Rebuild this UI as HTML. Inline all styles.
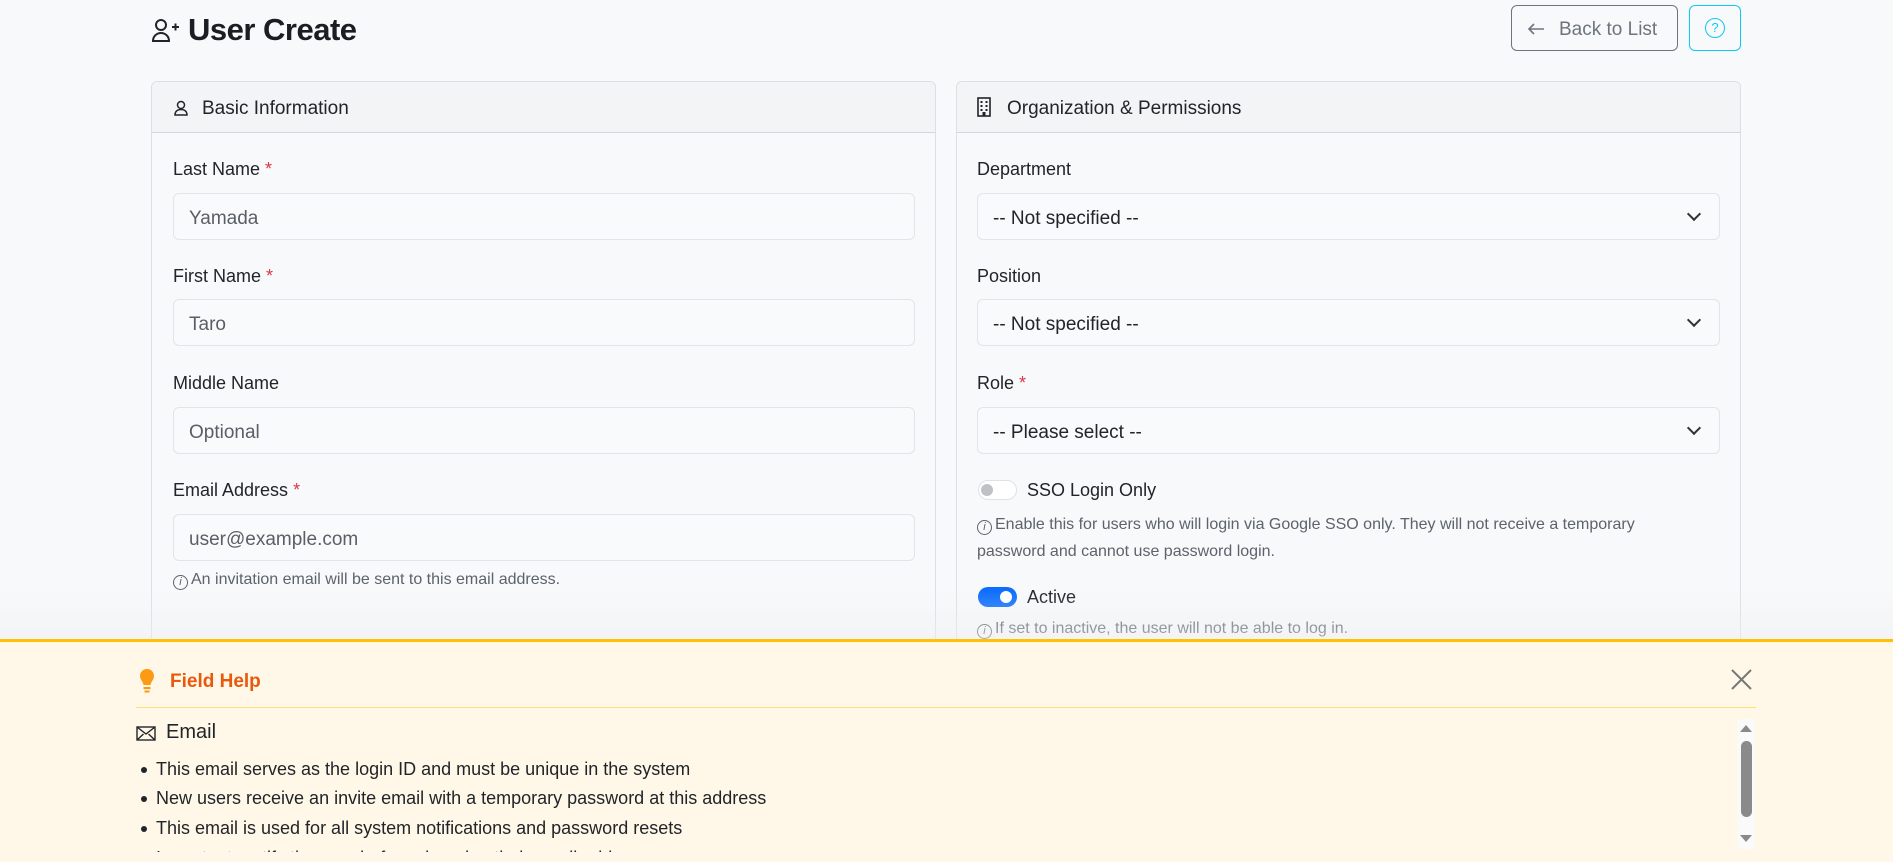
<!DOCTYPE html>
<html><head><meta charset="utf-8"><style>
*{box-sizing:border-box;margin:0;padding:0}
body{width:1893px;height:862px;overflow:hidden;background:#f8f9fb;font-family:"Liberation Sans",sans-serif;color:#212529;position:relative}
.a{position:absolute}
.t{font-size:18px;white-space:nowrap}
.card{position:absolute;top:81px;height:600px;border:1px solid #dcdfe3;border-radius:6px;background:#f8f9fb}
.ch{height:51px;background:#f3f4f6;border-bottom:1px solid #d3d6da;border-radius:6px 6px 0 0;font-size:19px;padding:16px 0 0 50px;position:relative}
.in{position:absolute;height:47px;border:1px solid #e1e4e8;border-radius:6px;background:#f9fafb;font-size:19px;color:#595f66;padding:14px 0 0 15px}
.sel{color:#212529}
.sel:after{content:"";position:absolute;right:20px;top:15px;width:8px;height:8px;border-right:2px solid #333;border-bottom:2px solid #333;transform:rotate(45deg)}
.req{color:#dc3545}
.help{font-size:16px;color:#5c636a;white-space:nowrap}
.ic{display:inline-block;width:15px;height:15px;border:1.3px solid #5c636a;border-radius:50%;font-size:11px;text-align:center;line-height:13px;font-style:italic;vertical-align:-1px;margin-right:3px}
li{list-style:none;position:absolute;left:156px;font-size:18px;white-space:nowrap;color:#212529}
li:before{content:"";position:absolute;left:-15px;top:8px;width:6px;height:6px;border-radius:50%;background:#212529}
</style></head><body>
<svg class="a" style="left:151px;top:17px" width="30" height="28" viewBox="0 0 30 28" fill="none" stroke="#212529" stroke-width="2"><circle cx="10" cy="8" r="5"/><path d="M2 24c0-5 4-8 8-8s8 3 8 8z"/><path d="M21 10h7M24.5 6.5v7"/></svg>
<div class="a" style="left:188px;top:12px;font-size:31px;font-weight:bold;color:#1a1d21;letter-spacing:-0.5px">User Create</div>
<div class="a" style="left:1511px;top:5px;width:167px;height:46px;border:1px solid #6c757d;border-radius:6px;font-size:19px;color:#6c757d;padding:13px 0 0 47px">Back to List</div>
<svg class="a" style="left:1526px;top:21px" width="20" height="16"><path d="M18 8H3M8 3L3 8l5 5" stroke="#6c757d" stroke-width="1.6" fill="none"/></svg>
<div class="a" style="left:1689px;top:5px;width:52px;height:46px;border:1px solid #0dcaf0;border-radius:6px"></div>
<div class="a" style="left:1705px;top:18px;width:20px;height:20px;border:1.6px solid #0dcaf0;border-radius:50%;color:#0dcaf0;font-size:13px;text-align:center;line-height:17px">?</div>

<div class="card" style="left:151px;width:785px"><div class="ch">Basic Information
<svg class="a" style="left:22px;top:18px" width="14" height="16" fill="none" stroke="#212529" stroke-width="1.5"><circle cx="7" cy="5" r="3.5"/><path d="M1 15c0-4 3-5.5 6-5.5s6 1.5 6 5.5z"/></svg></div></div>
<div class="card" style="left:956px;width:785px"><div class="ch">Organization &amp; Permissions
<svg class="a" style="left:20px;top:15px" width="14" height="20"><rect x="1" y="1" width="12" height="18" fill="none" stroke="#212529" stroke-width="1.6"/><g fill="#212529"><rect x="3.5" y="4" width="2" height="2"/><rect x="8.5" y="4" width="2" height="2"/><rect x="3.5" y="8" width="2" height="2"/><rect x="8.5" y="8" width="2" height="2"/><rect x="3.5" y="12" width="2" height="2"/><rect x="8.5" y="12" width="2" height="2"/><rect x="5.5" y="15" width="3" height="4"/></g></svg></div></div>

<div class="a t" style="left:173px;top:159px">Last Name <span class="req">*</span></div>
<div class="in" style="left:173px;top:193px;width:742px">Yamada</div>
<div class="a t" style="left:173px;top:266px">First Name <span class="req">*</span></div>
<div class="in" style="left:173px;top:299px;width:742px">Taro</div>
<div class="a t" style="left:173px;top:373px">Middle Name</div>
<div class="in" style="left:173px;top:407px;width:742px">Optional</div>
<div class="a t" style="left:173px;top:480px">Email Address <span class="req">*</span></div>
<div class="in" style="left:173px;top:514px;width:742px">user@example.com</div>
<div class="a help" style="left:173px;top:571px"><span class="ic">i</span>An invitation email will be sent to this email address.</div>

<div class="a t" style="left:977px;top:159px">Department</div>
<div class="in sel" style="left:977px;top:193px;width:743px">-- Not specified --</div>
<div class="a t" style="left:977px;top:266px">Position</div>
<div class="in sel" style="left:977px;top:299px;width:743px">-- Not specified --</div>
<div class="a t" style="left:977px;top:373px">Role <span class="req">*</span></div>
<div class="in sel" style="left:977px;top:407px;width:743px">-- Please select --</div>
<div class="a" style="left:978px;top:480px;width:39px;height:20px;border:1px solid #dee2e6;border-radius:10px;background:#fff"></div>
<div class="a" style="left:981px;top:484px;width:12px;height:12px;border-radius:50%;background:#bfc2c5"></div>
<div class="a t" style="left:1027px;top:480px">SSO Login Only</div>
<div class="a help" style="left:977px;top:511px;line-height:27px;white-space:normal;width:660px"><span class="ic">i</span>Enable this for users who will login via Google SSO only. They will not receive a temporary password and cannot use password login.</div>
<div class="a" style="left:978px;top:587px;width:39px;height:20px;border-radius:10px;background:#0d6efd"></div>
<div class="a" style="left:1000px;top:591px;width:12px;height:12px;border-radius:50%;background:#fff"></div>
<div class="a t" style="left:1027px;top:587px">Active</div>
<div class="a help" style="left:977px;top:620px"><span class="ic">i</span>If set to inactive, the user will not be able to log in.</div>

<div class="a" style="left:0;top:590px;width:1893px;height:50px;background:linear-gradient(rgba(240,241,243,0),rgba(238,239,241,.5))"></div>
<div class="a" style="left:0;top:639px;width:1893px;height:223px;background:#fff8e8;border-top:3px solid #ffc107"></div>
<svg class="a" style="left:138px;top:668px" width="18" height="26"><path d="M9 1C4.5 1 2 4.5 2 8c0 3.5 3 5.5 3.5 9h7C13 13.5 16 11.5 16 8c0-3.5-2.5-7-7-7z" fill="#fd9a14"/><rect x="5.5" y="19" width="7" height="2.2" fill="#fd9a14"/><rect x="6.5" y="22.5" width="5" height="2" fill="#fd9a14"/></svg>
<div class="a" style="left:170px;top:671px;font-size:19px;font-weight:bold;color:#e8590c">Field Help</div>
<svg class="a" style="left:1731px;top:669px" width="21" height="21"><path d="M1 1l19 19M20 1L1 20" stroke="#777" stroke-width="2"/></svg>
<div class="a" style="left:136px;top:707px;width:1620px;height:1px;background:#ffdf77"></div>
<svg class="a" style="left:136px;top:726px" width="20" height="15" fill="none" stroke="#212529" stroke-width="1.4"><rect x="1" y="1" width="18" height="13"/><path d="M1 1l9 7 9-7M1 14l6.5-6M19 14l-6.5-6"/></svg>
<div class="a" style="left:166px;top:721px;font-size:20px">Email</div>
<div class="a" style="left:0;top:740px;width:1720px;height:112px;overflow:hidden">
<li style="top:19px">This email serves as the login ID and must be unique in the system</li>
<li style="top:48px">New users receive an invite email with a temporary password at this address</li>
<li style="top:78px">This email is used for all system notifications and password resets</li>
<li style="top:108px">Important: notify the user before changing their email address</li>
</div>
<div class="a" style="left:1737px;top:719px;width:18px;height:130px;background:#fafafa"></div>
<div class="a" style="left:1741px;top:741px;width:11px;height:76px;border-radius:6px;background:#8a8a8a"></div>
<div class="a" style="left:1740px;top:725px;width:0;height:0;border-left:6px solid transparent;border-right:6px solid transparent;border-bottom:7px solid #8a8a8a"></div>
<div class="a" style="left:1740px;top:835px;width:0;height:0;border-left:6px solid transparent;border-right:6px solid transparent;border-top:7px solid #8a8a8a"></div>
</body></html>
